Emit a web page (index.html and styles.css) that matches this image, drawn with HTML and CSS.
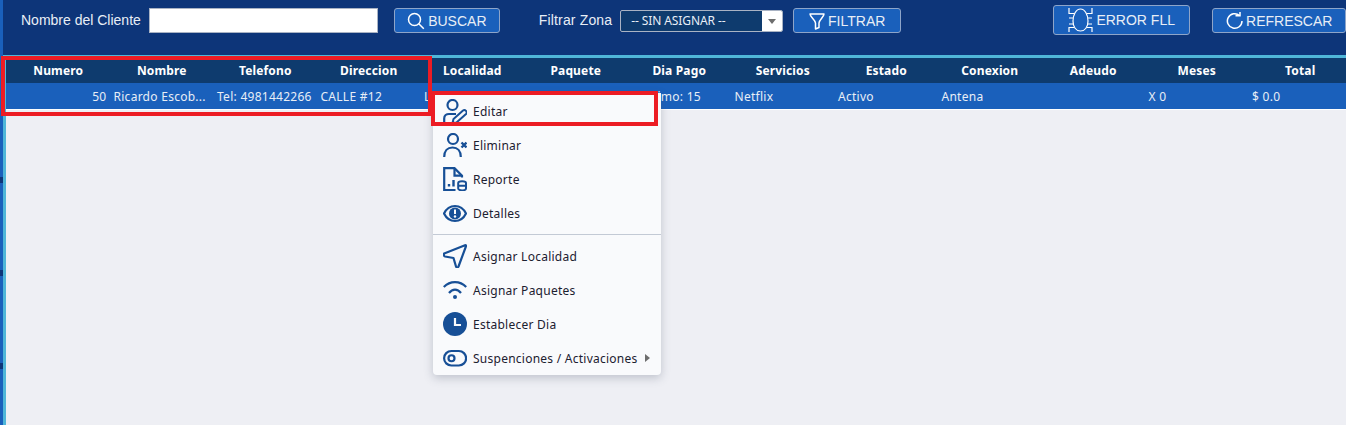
FILE: index.html
```html
<!DOCTYPE html>
<html lang="en">
  <head>
    <meta charset="UTF-8" />
    <meta name="viewport" content="width=device-width, initial-scale=1.0" />
    <title>Clientes</title>
    <link rel="stylesheet" href="styles.css">
  </head>
  <body>
    <div class="side-strip">
      <span class="side-mark"></span>
      <span class="side-mark"></span>
      <span class="side-mark"></span>
    </div>
    <div class="main">
      <div class="toolbar">
        <label class="tool-label">Nombre del Cliente</label>
        <input type="text" class="search-input" />
        <button class="tool-button buscar-button">
          <svg width="18" height="18" viewBox="0 0 18 18" fill="none" stroke="#fff" stroke-width="1.500"><circle cx="7.500" cy="7.500" r="6"/><path d="M11.800 11.800 16.800 16.800"/></svg>
          BUSCAR
        </button>
        <label class="tool-label zona-label">Filtrar Zona</label>
        <div class="zona-select">
          <span class="zona-value">-- SIN ASIGNAR --</span>
          <span class="zona-arrow"></span>
        </div>
        <button class="tool-button filtrar-button">
          <svg width="16" height="18" viewBox="0 0 16 18" fill="none" stroke="#fff" stroke-width="1.500" stroke-linejoin="round"><path d="M1 2H15C15 5 10 8 10 11V15.500L6.500 17V11C6.500 8 1 5 1 2Z"/></svg>
          FILTRAR
        </button>
        <button class="tool-button error-button">
          <svg width="25" height="26" viewBox="0 0 25 26" fill="none" stroke="#fff" stroke-width="1.200"><path d="M12.500 2C17 2 20 8 20 14S17 24 12.500 24 5 20 5 14 8 2 12.500 2Z"/><path d="M1 1V6.500H6.500M24 1V6.500H18.500M1 11H5M24 11H20M1 17H5M24 17H20M1 25V20.500H6M24 25V20.500H19"/></svg>
          ERROR FLL
        </button>
        <button class="tool-button refrescar-button">
          <svg width="17" height="18" viewBox="0 0 17 18" fill="none" stroke="#fff" stroke-width="1.500"><path d="M13.500 3.500A7.300 7.300 0 1 0 16 9"/><path d="M9.500 3.800H14V0"/></svg>
          REFRESCAR
        </button>
      </div>
      <div class="table-wrap">
        <div class="table-head">
          <div>Numero</div><div>Nombre</div><div>Telefono</div><div>Direccion</div><div>Localidad</div><div>Paquete</div><div>Dia Pago</div><div>Servicios</div><div>Estado</div><div>Conexion</div><div>Adeudo</div><div>Meses</div><div>Total</div>
        </div>
        <div class="table-row">
          <div class="cell-num">50</div><div>Ricardo Escob...</div><div>Tel: 4981442266</div><div>CALLE #12</div><div>Lomas</div><div>10 Megas</div><div>Proximo: 15</div><div>Netflix</div><div>Activo</div><div>Antena</div><div></div><div>X 0</div><div>$ 0.0</div>
        </div>
      </div>
    </div>

    <div class="context-menu">
      <div class="menu-item">
        <svg class="menu-icon" viewBox="0 0 24 24" fill="none" stroke="#174f96" stroke-width="2.200"><circle cx="9.500" cy="6" r="5"/><path d="M1.200 24V19.500C1.200 16.500 3.500 15 6 15H13"/><path d="M9.500 24 10.500 20 20 11.500C22 10 25 13 23 15L13.500 23.500Z" stroke-width="2"/></svg>
        Editar
      </div>
      <div class="menu-item">
        <svg class="menu-icon" viewBox="0 0 24 24" fill="none" stroke="#174f96" stroke-width="2.200"><circle cx="10" cy="6" r="5"/><path d="M1.200 24C1.200 18 4.500 14.500 9.500 14.500S17.800 18 17.800 24"/><path d="M18.500 9.500 23.500 14.500M23.500 9.500 18.500 14.500" stroke-width="2.400"/></svg>
        Eliminar
      </div>
      <div class="menu-item">
        <svg class="menu-icon" viewBox="0 0 24 24" fill="none" stroke="#174f96" stroke-width="2.200"><path d="M12.500 23H1.200V1.200H11.500L19 8.700V10.500"/><path d="M11.500 1.200V8.700H19"/><path d="M6 19.500V17M10.500 19.500V13" stroke-width="2.400"/><path d="M15.200 16C15.200 13.500 23 13.500 23 16V21.500C23 24 15.200 24 15.200 21.500ZM15.200 18.800H23" stroke-width="2"/></svg>
        Reporte
      </div>
      <div class="menu-item">
        <svg class="menu-icon" viewBox="0 0 24 24" fill="none" stroke="#174f96" stroke-width="2.200"><path d="M1 12.500C3.500 7.500 7.500 5 12 5S20.500 7.500 23 12.500C20.500 17.500 16.500 20 12 20S3.500 17.500 1 12.500Z"/><circle cx="12" cy="12.500" r="6" fill="#174f96" stroke="none"/><path d="M12 8.500V13" stroke="#f9fafc" stroke-width="2"/><circle cx="12" cy="15.500" r="1.200" fill="#f9fafc" stroke="none"/></svg>
        Detalles
      </div>
      <div class="menu-sep"></div>
      <div class="menu-item">
        <svg class="menu-icon" viewBox="0 0 24 24" fill="none" stroke="#174f96" stroke-width="2.200" stroke-linejoin="round"><path d="M1.200 9.500 22 1.300C22.800 1 23.200 1.500 23 2.200L15.500 22.500C15 23.700 13.500 23.700 13 22.500L10.500 14 2 12.500C.8 12.200.5 10 1.200 9.500Z"/></svg>
        Asignar Localidad
      </div>
      <div class="menu-item">
        <svg class="menu-icon" viewBox="0 0 24 24" fill="none" stroke="#174f96" stroke-width="2.200"><path d="M.8 9C7 2.500 17 2.500 23.200 9"/><path d="M6 15C9.500 10.500 14.500 10.500 18 15"/><circle cx="12" cy="19" r="2" fill="#174f96" stroke="none"/></svg>
        Asignar Paquetes
      </div>
      <div class="menu-item">
        <svg class="menu-icon" viewBox="0 0 24 24"><circle cx="12" cy="12" r="12" fill="#174f96"/><path d="M12 6V13H18" fill="none" stroke="#f9fafc" stroke-width="2.200"/></svg>
        Establecer Dia
      </div>
      <div class="menu-item">
        <svg class="menu-icon" viewBox="0 0 24 24" fill="none" stroke="#174f96" stroke-width="2.200"><rect x="1.100" y="5" width="22" height="14.500" rx="7.250"/><circle cx="8.500" cy="12.250" r="3"/></svg>
        Suspenciones / Activaciones
        <span class="submenu-arrow"></span>
      </div>
    </div>

    <div class="mark mark-head"></div>
    <div class="mark mark-item"></div>
  </body>
</html>
```

FILE: styles.css
```css
html, body {
  margin: 0;
  height: 100%;
  overflow: hidden;
}
body {
  display: flex;
  width: 1346px;
  height: 425px;
  background: #eeeff4;
  font-family: "Noto Sans", sans-serif;
}
.side-strip {
  width: 3px;
  flex-shrink: 0;
  background: #1a60bb;
  padding-top: 177px;
  box-sizing: border-box;
}
.side-mark {
  display: block;
  height: 6px;
  margin-bottom: 87px;
  background: #0d3579;
}
.main {
  flex: 1;
  min-width: 0;
}

/* barra de arriba */
.toolbar {
  height: 55px;
  box-sizing: border-box;
  padding: 8px 0 0 18px;
  display: flex;
  align-items: flex-start;
  background: #0d3579;
  color: #fff;
}
.tool-label {
  flex-shrink: 0;
  white-space: nowrap;
  font-family: "Liberation Sans", sans-serif;
  font-size: 14px;
  line-height: 25px;
  color: #e8eef6;
}
.search-input {
  width: 229px;
  height: 25px;
  box-sizing: border-box;
  margin-left: 8px;
  border: 1px solid #a9b3c4;
  background: #fff;
  padding: 0;
  flex-shrink: 0;
}
.tool-button {
  display: flex;
  align-items: center;
  justify-content: center;
  flex-shrink: 0;
  gap: 3px;
  height: 25px;
  box-sizing: border-box;
  padding: 0;
  background: #1a60bb;
  border: 1px solid #8ea5c9;
  border-radius: 3px;
  color: #e8eef6;
  font-family: "Liberation Sans", sans-serif;
  font-size: 14px;
}
.buscar-button {
  width: 106px;
  margin-left: 16px;
}
.zona-label {
  margin-left: 39px;
  letter-spacing: 0.15px;
}
.zona-select {
  display: flex;
  flex-shrink: 0;
  width: 163px;
  height: 22px;
  box-sizing: border-box;
  margin: 2px 0 0 8px;
  border: 1px solid #a9b3c4;
  border-radius: 2px;
  background: #0e3b6e;
  overflow: hidden;
}
.zona-value {
  flex: 1;
  padding-left: 10px;
  font-size: 12px;
  letter-spacing: -0.1px;
  line-height: 20px;
  color: #e8eef6;
}
.zona-arrow {
  width: 20px;
  background: #fff;
  position: relative;
}
.zona-arrow::after {
  content: "";
  position: absolute;
  left: 6px;
  top: 8px;
  border-left: 4px solid transparent;
  border-right: 4px solid transparent;
  border-top: 5px solid #6d6d6d;
}
.filtrar-button {
  width: 108px;
  margin-left: 10px;
}
.error-button {
  width: 137px;
  height: 30px;
  margin: -3px 0 0 152px;
}
.refrescar-button {
  width: 134px;
  margin-left: 22px;
}

/* tabla */
.table-wrap {
  border-top: 3px solid #4fb6d8;
  border-left: 3px solid #4fb6d8;
  height: 370px;
  box-sizing: border-box;
}
.table-head, .table-row {
  display: grid;
  grid-template-columns: repeat(13, 103.5px);
}
.table-head {
  height: 25px;
  background: #0e3b6e;
  color: #fff;
  font-size: 12px;
  font-weight: 700;
  letter-spacing: 0.15px;
  line-height: 25px;
  text-align: center;
}
.table-head div {
  padding-left: 1px;
}
.table-row {
  height: 27px;
  box-sizing: border-box;
  background: #1a60bb;
  color: #e8eef6;
  font-size: 12px;
  letter-spacing: 0.27px;
  line-height: 27px;
  border-bottom: 1px solid #fff;
}
.table-row div {
  padding-left: 4px;
  white-space: nowrap;
  overflow: hidden;
}
.table-row .cell-num {
  padding: 0 3px 0 0;
  text-align: right;
}

/* menu contextual */
.context-menu {
  position: absolute;
  left: 433px;
  top: 93px;
  width: 228px;
  height: 282px;
  box-sizing: border-box;
  padding-top: 1px;
  background: #f9fafc;
  border-radius: 0 0 4px 4px;
  box-shadow: 0 3px 10px rgba(70, 80, 100, 0.28);
  color: #1c2030;
  font-size: 12px;
  letter-spacing: 0.25px;
}
.menu-item {
  display: flex;
  align-items: center;
  height: 34px;
  padding-left: 10px;
  gap: 6px;
}
.menu-icon {
  width: 24px;
  height: 24px;
  flex-shrink: 0;
}
.menu-sep {
  height: 1px;
  margin: 4px 0;
  background: #c3cad5;
}
.submenu-arrow {
  margin-left: 1px;
  border-top: 4px solid transparent;
  border-bottom: 4px solid transparent;
  border-left: 5px solid #6d6d6d;
}

/* recuadros rojos de la captura */
.mark {
  position: absolute;
  box-sizing: border-box;
  border: 4px solid #ec1c24;
}
.mark-head {
  left: 1px;
  top: 56px;
  width: 431px;
  height: 60px;
}
.mark-item {
  left: 431px;
  top: 91px;
  width: 227px;
  height: 35px;
}
```
